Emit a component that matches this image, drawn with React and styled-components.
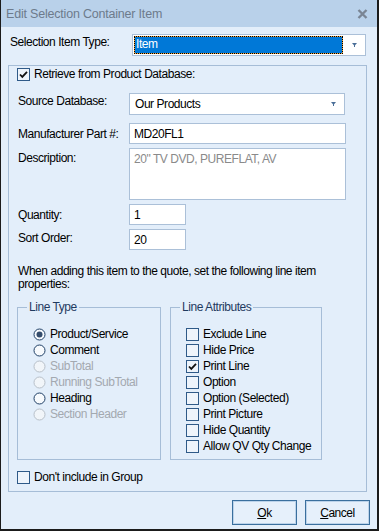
import React from "react";
import styled, { createGlobalStyle, css } from "styled-components";

const GlobalStyle = createGlobalStyle`
  html, body {
    margin: 0;
    padding: 0;
    background: #e3eefa;
  }
  * { box-sizing: border-box; }
`;

const uiFont = `"Liberation Sans Narrow", "Liberation Sans", Arial, sans-serif`;

const Window = styled.div`
  width: 379px;
  height: 531px;
  display: flex;
  flex-direction: column;
  background: #e3eefa;
  border-left: 1px solid #1b1b1b;
  border-right: 2px solid #1b1b1b;
  border-bottom: 2px solid #1b1b1b;
  font-family: ${uiFont};
  font-size: 12px;
  letter-spacing: -0.45px;
  color: #000;
  overflow: hidden;
`;

const TitleBar = styled.div`
  height: 27px;
  flex: none;
  display: flex;
  align-items: center;
  justify-content: space-between;
  padding: 0 9px 0 5px;
  background: #b9d1ea;
`;

const Title = styled.span`
  font-family: "Liberation Sans", sans-serif;
  font-size: 12.5px;
  letter-spacing: -0.2px;
  color: #6d7b8c;
`;

const Body = styled.div`
  flex: 1;
  display: flex;
  flex-direction: column;
  padding: 7px 10px 0 7px;
`;

const TopRow = styled.div`
  display: grid;
  grid-template-columns: 122px 1fr;
  align-items: start;
  height: 22px;
  margin-left: 2px;
`;

const Label = styled.div`
  padding-top: ${(p) => p.$top ?? 3}px;
  line-height: 13px;
  white-space: nowrap;
`;

const controlBorder = css`
  border: 1px solid #abc0d8;
  background: #fff;
`;

const Combo = styled.div`
  ${controlBorder};
  width: ${(p) => p.$w}px;
  height: 22px;
  display: flex;
  align-items: center;
  padding: 0 8px 0 2px;
  gap: 6px;
`;

const ComboText = styled.div`
  flex: 1;
  height: ${(p) => (p.$selected ? 16 : "auto")}px;
  line-height: 15px;
  padding-left: ${(p) => (p.$selected ? 1 : 3)}px;
  ${(p) =>
    p.$selected &&
    css`
      background: #0078d7;
      color: #fff;
      outline: 1px dotted #000;
      box-shadow: 0 0 0 1px #f3a43a;
      margin-right: 4px;
    `}
`;

const Arrow = () => (
  <svg width="5" height="4" viewBox="0 0 5 4">
    <path d="M0 0h5L2.5 3z" fill="#4a6e98" />
    <rect x="2" y="2" width="1" height="2" fill="#4a6e98" />
  </svg>
);

const Panel = styled.div`
  margin-top: 9px;
  height: 427px;
  border: 1px solid #a6bdd7;
  padding: 1px 8px 0 8px;
  display: flex;
  flex-direction: column;
`;

const CheckRow = styled.label`
  display: flex;
  align-items: center;
  gap: 4px;
  height: ${(p) => p.$h ?? 16}px;
  line-height: 13px;
  white-space: nowrap;
  color: ${(p) => (p.$disabled ? "#a3a9b0" : "#000")};
`;

const Box = styled.span`
  width: 13px;
  height: 13px;
  flex: none;
  border: 1px solid #2f5a88;
  background: #eef4fb;
  display: flex;
  align-items: center;
  justify-content: center;
`;

const Check = ({ on }) => (
  <Box>
    {on && (
      <svg width="9" height="9" viewBox="0 0 9 9">
        <path d="M1 4.5l2.3 2.4L8 1.8" fill="none" stroke="#111" strokeWidth="1.8" />
      </svg>
    )}
  </Box>
);

const Radio = ({ on, disabled }) => (
  <svg width="13" height="13" viewBox="0 0 13 13" style={{ flex: "none" }}>
    <circle
      cx="6.5"
      cy="6.5"
      r="5.5"
      fill={disabled ? "#f1f5f9" : "#f7fafd"}
      stroke={disabled ? "#b8c0c9" : "#1f3f66"}
      strokeWidth="1"
    />
    {on && <circle cx="6.5" cy="6.5" r="3" fill="#354d6c" />}
  </svg>
);

const FieldRow = styled.div`
  display: grid;
  grid-template-columns: 111px auto;
  align-items: start;
  margin-top: ${(p) => p.$mt}px;
  margin-left: 1px;
`;

const Input = styled.div`
  ${controlBorder};
  width: ${(p) => p.$w}px;
  height: ${(p) => p.$h ?? 21}px;
  padding: 3px 4px 0;
  line-height: 14px;
  color: ${(p) => (p.$muted ? "#8a8a8a" : "#000")};
`;

const Note = styled.p`
  margin: 15px 0 0 1px;
  width: 300px;
  line-height: 13px;
`;

const Groups = styled.div`
  display: flex;
  gap: 9px;
  margin-top: 16px;
`;

const Group = styled.fieldset`
  margin: 0;
  width: ${(p) => p.$w}px;
  height: 159px;
  border: 1px solid #a6bdd7;
  padding: 12px 0 0 15px;
  min-inline-size: 0;
  position: relative;
  top: -6px;
`;

const Legend = styled.legend`
  padding: 0 2px;
  margin-left: -6px;
  line-height: 13px;
  color: #1f3a5f;
`;

const Footer = styled.div`
  display: flex;
  justify-content: flex-end;
  gap: 8px;
  margin: 8px -3px 0 0;
`;

const Button = styled.button`
  width: 65px;
  height: 25px;
  border: 1px solid #3a6f9e;
  box-shadow: inset 0 0 0 1px #bcd3ea;
  background: #e6f0fb;
  font-family: ${uiFont};
  font-size: 12px;
  letter-spacing: -0.45px;
  padding: 0;
  color: #000;
  u { text-decoration: underline; }
`;

const lineTypes = [
  ["Product/Service", true, false],
  ["Comment", false, false],
  ["SubTotal", false, true],
  ["Running SubTotal", false, true],
  ["Heading", false, false],
  ["Section Header", false, true],
];

const attrs = [
  ["Exclude Line", false],
  ["Hide Price", false],
  ["Print Line", true],
  ["Option", false],
  ["Option (Selected)", false],
  ["Print Picture", false],
  ["Hide Quantity", false],
  ["Allow QV Qty Change", false],
];

export default function App() {
  return (
    <>
      <GlobalStyle />
      <Window>
        <TitleBar>
          <Title>Edit Selection Container Item</Title>
          <svg width="11" height="10" viewBox="0 0 11 10">
            <path d="M1.5 1l8 8M9.5 1l-8 8" stroke="#7a8594" strokeWidth="2.4" />
          </svg>
        </TitleBar>
        <Body>
          <TopRow>
            <Label $top={2}>Selection Item Type:</Label>
            <Combo $w={234}>
              <ComboText $selected>Item</ComboText>
              <Arrow />
            </Combo>
          </TopRow>

          <Panel>
            <CheckRow $h={15}>
              <Check on />
              Retrieve from Product Database:
            </CheckRow>

            <FieldRow $mt={11}>
              <Label $top={2}>Source Database:</Label>
              <Combo $w={216}>
                <ComboText>Our Products</ComboText>
                <Arrow />
              </Combo>
            </FieldRow>
            <FieldRow $mt={8}>
              <Label $top={5}>Manufacturer Part #:</Label>
              <Input $w={217}>MD20FL1</Input>
            </FieldRow>
            <FieldRow $mt={4}>
              <Label $top={4}>Description:</Label>
              <Input $w={217} $h={52} $muted>
                20" TV DVD, PUREFLAT, AV
              </Input>
            </FieldRow>
            <FieldRow $mt={4}>
              <Label $top={5}>Quantity:</Label>
              <Input $w={57}>1</Input>
            </FieldRow>
            <FieldRow $mt={4}>
              <Label $top={3}>Sort Order:</Label>
              <Input $w={57}>20</Input>
            </FieldRow>

            <Note>
              When adding this item to the quote, set the following line item
              properties:
            </Note>

            <Groups>
              <Group $w={144}>
                <Legend>Line Type</Legend>
                {lineTypes.map(([t, on, dis]) => (
                  <CheckRow key={t} $disabled={dis}>
                    <Radio on={on} disabled={dis} />
                    {t}
                  </CheckRow>
                ))}
              </Group>
              <Group $w={152}>
                <Legend>Line Attributes</Legend>
                {attrs.map(([t, on]) => (
                  <CheckRow key={t}>
                    <Check on={on} />
                    {t}
                  </CheckRow>
                ))}
              </Group>
            </Groups>

            <CheckRow $h={13} style={{ marginTop: 5 }}>
              <Check />
              Don't include in Group
            </CheckRow>
          </Panel>

          <Footer>
            <Button>
              <u>O</u>k
            </Button>
            <Button>
              <u>C</u>ancel
            </Button>
          </Footer>
        </Body>
      </Window>
    </>
  );
}
